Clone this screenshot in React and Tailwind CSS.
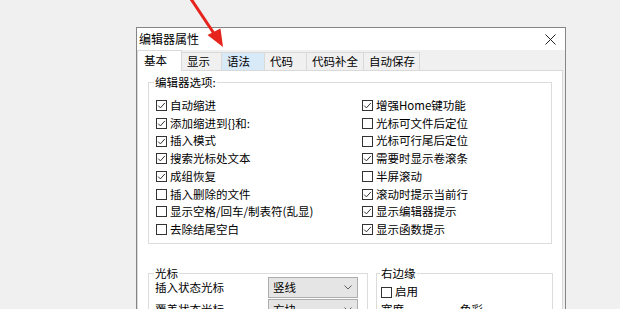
import React from 'react';

const leftOpts = [
    ['自动缩进', true],
    ['添加缩进到{}和:', true],
    ['插入模式', true],
    ['搜索光标处文本', true],
    ['成组恢复', true],
    ['插入删除的文件', false],
    ['显示空格/回车/制表符(乱显)', false],
    ['去除结尾空白', false],
];

const rightOpts = [
    ['增强Home键功能', true],
    ['光标可文件后定位', false],
    ['光标可行尾后定位', false],
    ['需要时显示卷滚条', true],
    ['半屏滚动', false],
    ['滚动时提示当前行', true],
    ['显示编辑器提示', true],
    ['显示函数提示', true],
];

const tabs = [
    { label: '显示', w: 'w-[40px]', bg: 'bg-[#f0f0f0]' },
    { label: '语法', w: 'w-[43px]', bg: 'bg-[#d8e9f8]' },
    { label: '代码', w: 'w-[42px]', bg: 'bg-[#f0f0f0]' },
    { label: '代码补全', w: 'w-[57px]', bg: 'bg-[#f0f0f0]' },
    { label: '自动保存', w: 'w-[56px]', bg: 'bg-[#f0f0f0]' },
];

const Check = ({ on }) => (
    <span className="flex h-[11px] w-[11px] shrink-0 items-center justify-center border border-[#333] bg-white">
        {on && (
            <svg width="9" height="9" viewBox="0 0 9 9">
                <path d="M1.2 4.6 L3.4 6.9 L7.9 1.9" fill="none" stroke="#333" strokeWidth="1" />
            </svg>
        )}
    </span>
);

const Option = ({ label, on }) => (
    <div className="flex h-[17.7px] items-center">
        <Check on={on} />
        <span className="ml-[3px] leading-none whitespace-nowrap">{label}</span>
    </div>
);

const Select = ({ value }) => (
    <div className="flex h-[21px] w-[90px] items-center justify-between border border-[#adadad] bg-[#e5e5e5] pl-[4px] pr-[5px]">
        <span className="leading-none">{value}</span>
        <svg width="8" height="5" viewBox="0 0 8 5">
            <path d="M0.5 0.5 L4 4 L7.5 0.5" fill="none" stroke="#606060" strokeWidth="1" />
        </svg>
    </div>
);

const App = () => {
    return (
        <div className="relative h-[309px] w-[620px] overflow-hidden bg-[#f0f0f0] pl-[136px] pt-[27px] font-['Noto_Sans_CJK_SC',sans-serif] text-[11.5px] text-black">
            <div className="flex h-[290px] w-[430px] flex-col border border-b-0 border-[#858585] bg-[#f0f0f0]">
                {/* title bar */}
                <div className="flex h-[22px] shrink-0 items-center justify-between bg-white pl-[2px] pr-[9px]">
                    <span className="text-[12px] leading-none">编辑器属性</span>
                    <svg width="11" height="11" viewBox="0 0 11 11">
                        <path d="M0.5 0.5 L10.5 10.5 M10.5 0.5 L0.5 10.5" stroke="#222" strokeWidth="1" />
                    </svg>
                </div>

                {/* tabs */}
                <div className="flex h-[20px] shrink-0 items-end">
                    <div className="relative z-10 -mb-[1px] flex h-[21px] w-[45px] items-center border-x border-t border-[#d9d9d9] bg-white pb-[1px] pl-[6px]">
                        基本
                    </div>
                    {tabs.map((t) => (
                        <div
                            key={t.label}
                            className={`flex h-[18px] items-center border-t border-r border-[#d9d9d9] pl-[5px] ${t.w} ${t.bg}`}
                        >
                            {t.label}
                        </div>
                    ))}
                </div>

                {/* page */}
                <div className="mr-[2px] min-h-0 flex-1 overflow-hidden border border-[#d9d9d9] bg-white">
                    <fieldset className="ml-[10px] mt-[4px] h-[169px] w-[404px] border border-[#dcdcdc]">
                        <legend className="ml-[5px] px-[1px] leading-[14px]">编辑器选项:</legend>
                        <div className="flex pt-[8px]">
                            <div className="w-[213px] pl-[7px]">
                                {leftOpts.map(([l, on]) => (
                                    <Option key={l} label={l} on={on} />
                                ))}
                            </div>
                            <div>
                                {rightOpts.map(([l, on]) => (
                                    <Option key={l} label={l} on={on} />
                                ))}
                            </div>
                        </div>
                    </fieldset>

                    <div className="ml-[10px] mt-[23px] flex gap-[8px]">
                        <fieldset className="h-[80px] w-[220px] border border-[#dcdcdc]">
                            <legend className="ml-[5px] px-[1px] leading-[12px]">光标</legend>
                            <div className="-mt-[2px] flex items-center">
                                <span className="w-[119px] pl-[6px] leading-none">插入状态光标</span>
                                <Select value="竖线" />
                            </div>
                            <div className="mt-[1px] flex items-center">
                                <span className="w-[119px] pl-[6px] leading-none">覆盖状态光标</span>
                                <Select value="方块" />
                            </div>
                        </fieldset>
                        <fieldset className="h-[80px] w-[177px] border border-[#dcdcdc]">
                            <legend className="ml-[3px] px-[1px] leading-[12px]">右边缘</legend>
                            <div className="mt-[4px] flex h-[18px] items-center pl-[4px]">
                                <Check on={false} />
                                <span className="ml-[3px] leading-none">启用</span>
                            </div>
                            <div className="flex h-[18px] items-center pl-[4px]">
                                <span className="w-[79px] leading-none">宽度</span>
                                <span className="leading-none">色彩</span>
                            </div>
                        </fieldset>
                    </div>
                </div>
            </div>

            {/* red annotation arrow */}
            <svg className="pointer-events-none absolute left-[180px] top-0" width="50" height="52" viewBox="180 0 50 52">
                <line x1="189" y1="-4" x2="215" y2="35" stroke="#e6231c" strokeWidth="3" />
                <polygon points="223,47 207.5,35 220.5,28.5" fill="#e6231c" />
            </svg>
        </div>
    );
};

export default App;
